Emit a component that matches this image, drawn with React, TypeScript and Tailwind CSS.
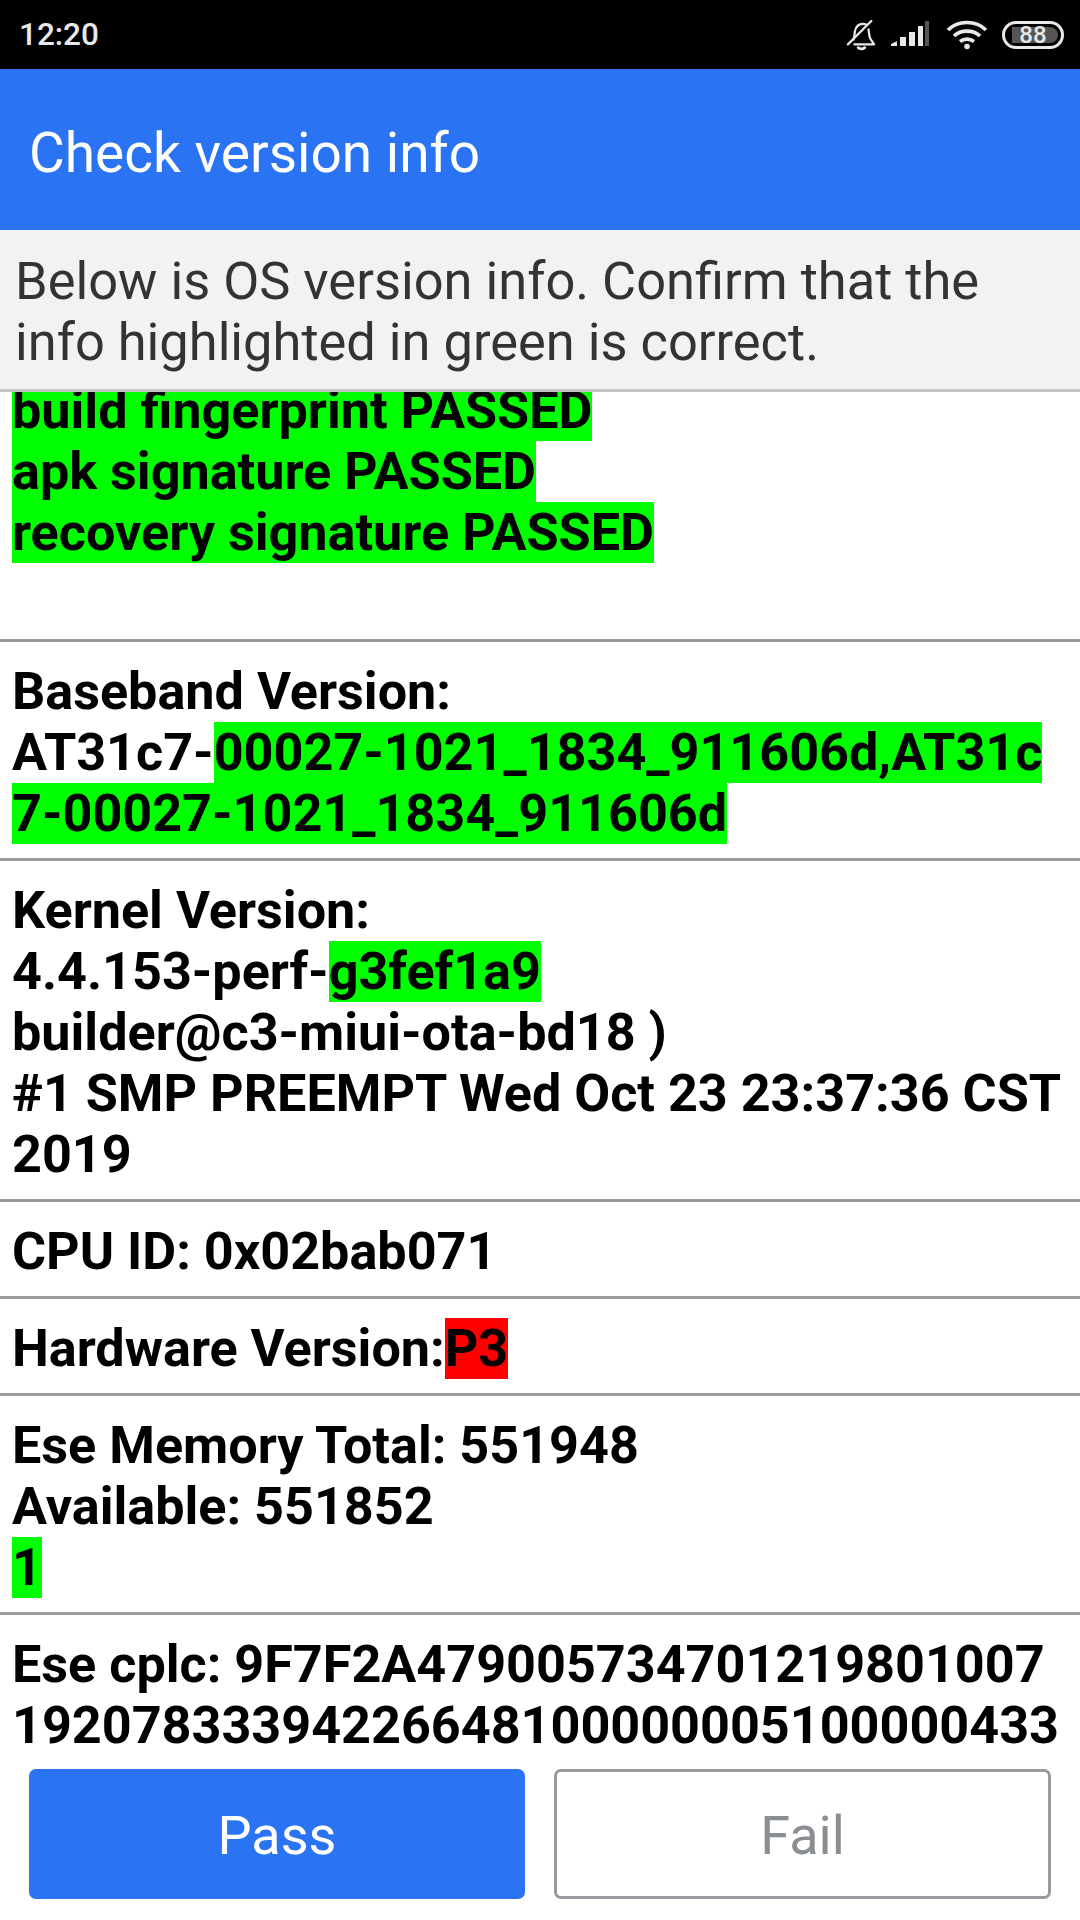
const Hl = ({ children, color = "bg-[#00ff00]" }: { children: React.ReactNode; color?: string }) => (
  <span className={`inline-block ${color}`}>{children}</span>
);

const Line = ({ children }: { children?: React.ReactNode }) => (
  <div className="h-[61px] whitespace-nowrap">{children}</div>
);

const Row = ({ children }: { children: React.ReactNode }) => (
  <div className="border-b-[3px] border-[#9a9a9e] pl-3 pt-[19px] pb-[14px]">{children}</div>
);

const StatusBar = () => (
  <div className="flex h-[69px] items-center justify-between bg-black pl-[19px] pr-[16px] text-[#e8e8e8]">
    <span className="text-[31.500px] font-medium leading-none">12:20</span>
    <div className="flex items-center">
      <svg className="h-[32px] w-[30px]" viewBox="0 0 32 34" fill="none" stroke="currentColor" strokeWidth="2.400" strokeLinecap="round" strokeLinejoin="round">
        <path d="M2 27L27 2" />
        <path d="M8 22c1-3 1-6 1.500-9C10.500 8 14 5 18 5c1.500 0 3 .5 4 1.300M24 11c.5 3 .5 7 2 10l4 6H9" />
        <path d="M13 30.500c2 1.500 5 1.500 7 0" strokeWidth="3" />
      </svg>
      <svg className="ml-[14px] h-[30px] w-[40px]" viewBox="0 0 40 30" fill="currentColor">
        <path d="M1 24l6-3v5H1zM10 17h6v9h-6zM19 12h6v14h-6zM28 6h5v20h-5z" />
        <path d="M35 1h4v25h-4z" fill="#555" />
      </svg>
      <svg className="ml-[16px] h-[32px] w-[42px]" viewBox="0 0 42 32" fill="none" stroke="currentColor" strokeWidth="3.600">
        <path d="M2 11C12 1 30 1 40 11M8 17c7-6.500 19-6.500 26 0M14 22.500c4-3.200 10-3.200 14 0" />
        <circle cx="21" cy="27.500" r="2.800" fill="currentColor" stroke="none" />
      </svg>
      <div className="relative ml-[14px] flex h-[28px] w-[62px] items-center justify-center rounded-full border-[3px] border-[#e8e8e8] p-[3px]">
        <div className="absolute inset-y-[3px] left-[7px] right-[3px] rounded-r-full bg-[#555]" />
        <span className="relative text-[24px] font-medium leading-none">88</span>
      </div>
    </div>
  </div>
);

export default function App() {
  return (
    <div className="flex h-[1920px] w-[1080px] flex-col overflow-hidden bg-white font-['Roboto',sans-serif]">
      <StatusBar />

      <div className="flex h-[161px] items-center bg-[#2a74f4] pl-[29px] pt-[7px] text-[55px] text-white">Check version info</div>

      {/* Instructions */}
      <div className="h-[162px] border-b-[3px] border-[#c4c4c4] bg-[#f2f2f2] pl-[15px] pt-[21px] text-[52.400px] leading-[61px] text-[#333333]">
        <div>Below is OS version info. Confirm that the</div>
        <div>info highlighted in green is correct.</div>
      </div>

      {/* Scrolled list */}
      <div className="h-[1376px] overflow-hidden text-[52.150px] leading-[61px] font-bold text-black">
        <div className="-mt-[12px]">
          <div className="border-b-[3px] border-[#9a9a9e] pl-3 pb-[76px]">
            <Line><Hl>build fingerprint PASSED</Hl></Line>
            <Line><Hl>apk signature PASSED</Hl></Line>
            <Line><Hl>recovery signature PASSED</Hl></Line>
          </div>
          <Row>
            <Line>Baseband Version:</Line>
            <Line>AT31c7-<Hl>00027-1021_1834_911606d,AT31c</Hl></Line>
            <Line><Hl>7-00027-1021_1834_911606d</Hl></Line>
          </Row>
          <Row>
            <Line>Kernel Version:</Line>
            <Line>4.4.153-perf-<Hl>g3fef1a9</Hl></Line>
            <Line>builder@c3-miui-ota-bd18 )</Line>
            <Line>#1 SMP PREEMPT Wed Oct 23 23:37:36 CST</Line>
            <Line>2019</Line>
          </Row>
          <Row><Line>CPU ID: 0x02bab071</Line></Row>
          <Row><Line>Hardware Version:<Hl color="bg-[#ff0000]">P3</Hl></Line></Row>
          <Row>
            <Line>Ese Memory Total: 551948</Line>
            <Line>Available: 551852</Line>
            <Line><Hl>1</Hl></Line>
          </Row>
          <div className="pl-3 pt-[19px]">
            <Line>Ese cplc: 9F7F2A479005734701219801007</Line>
            <Line>19207833394226648100000005100000433</Line>
          </div>
        </div>
      </div>

      {/* Actions */}
      <div className="flex gap-[29px] pl-[29px] pt-[1px]">
        <button className="h-[130px] w-[496px] rounded-[7px] bg-[#2a74f4] pt-[3px] text-[54px] text-white">Pass</button>
        <button className="h-[130px] w-[497px] rounded-[7px] border-[3px] border-[#96999e] pt-[3px] text-[54px] text-[#8a8d91]">Fail</button>
      </div>
    </div>
  );
}
